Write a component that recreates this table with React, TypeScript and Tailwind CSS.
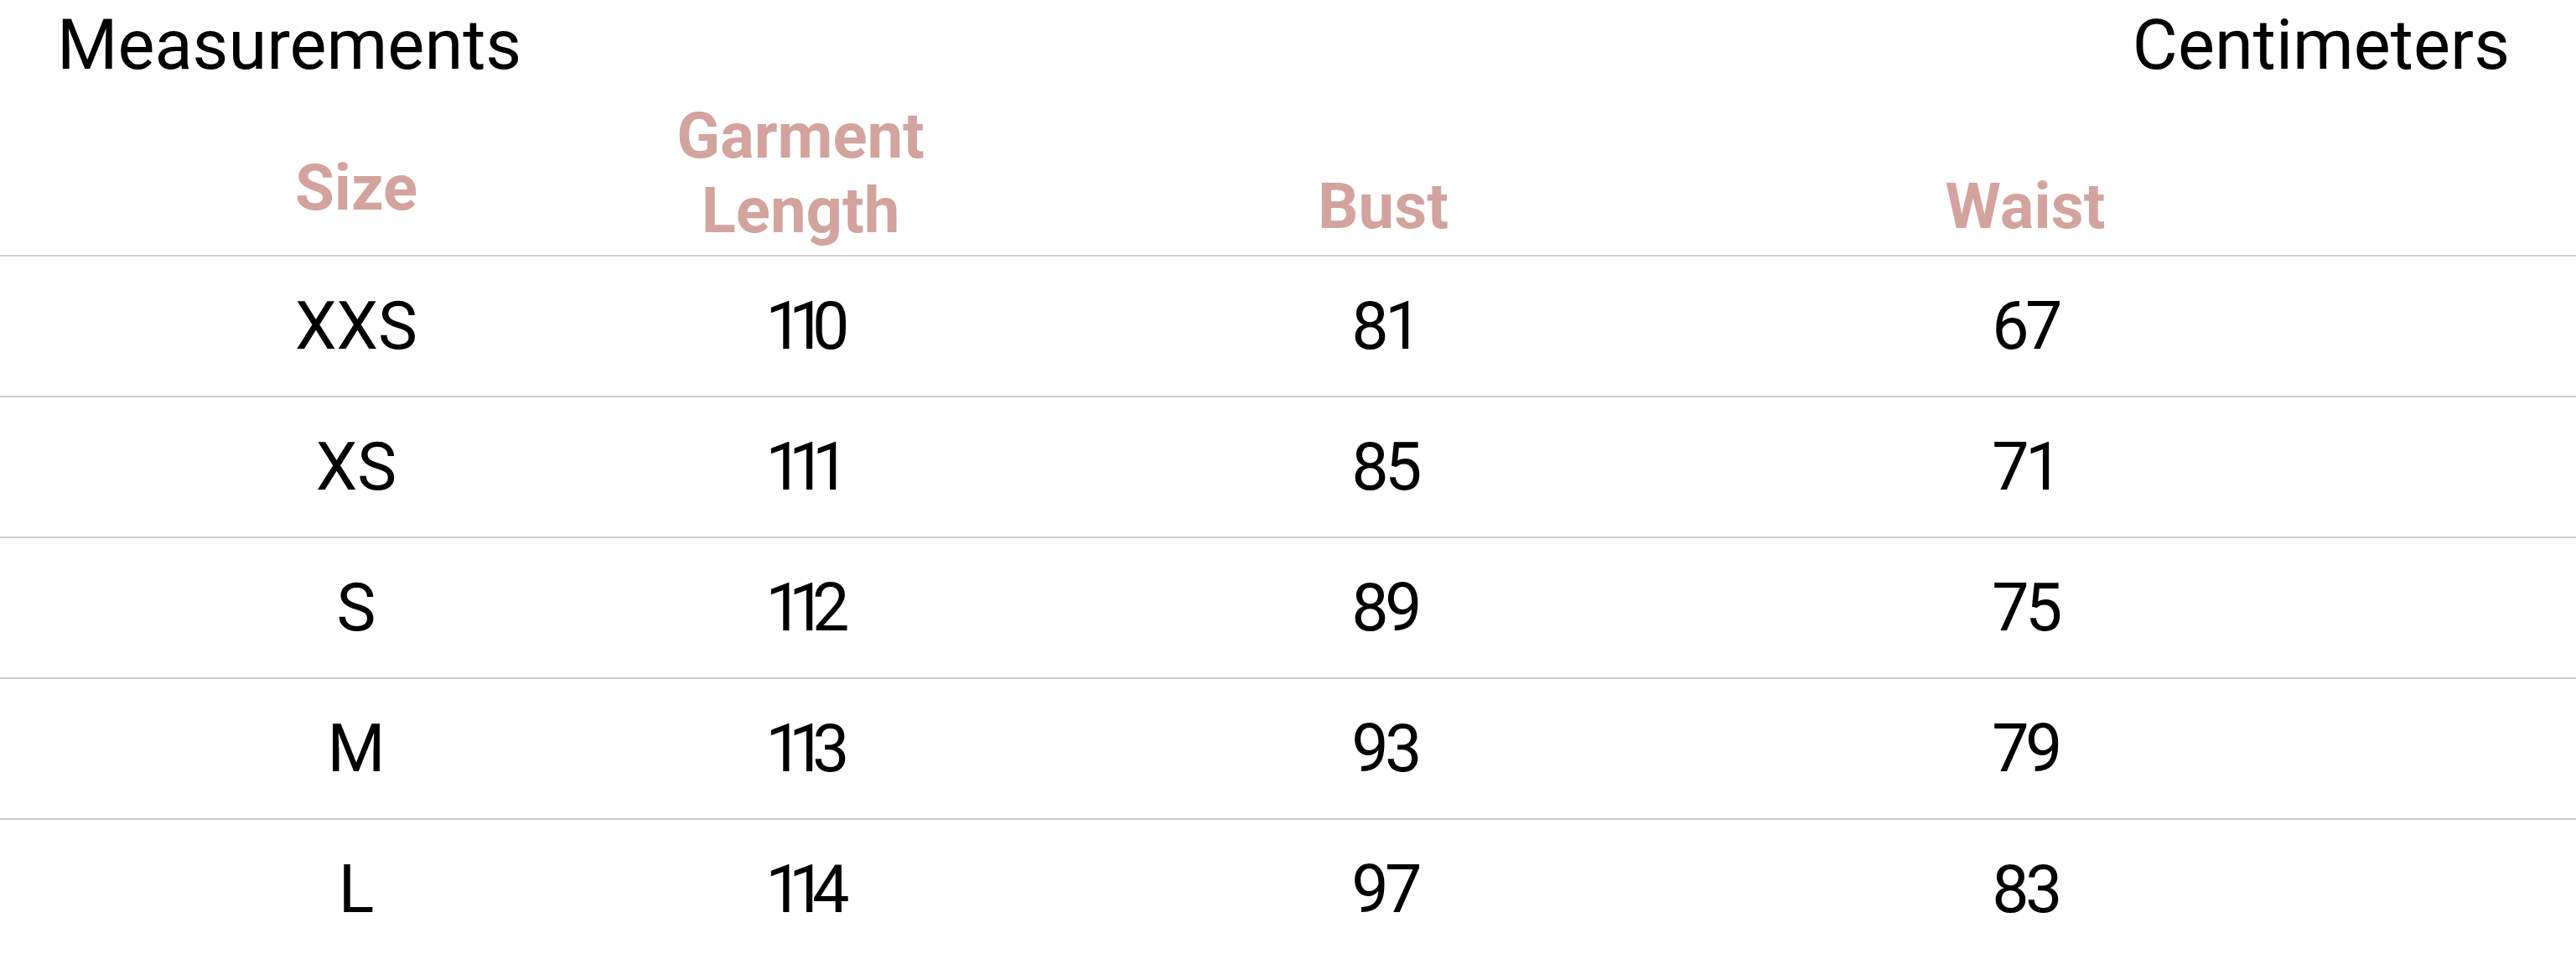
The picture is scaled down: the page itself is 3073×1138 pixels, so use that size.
const rows = [
  { size: 'XXS', length: '110', bust: '81', waist: '67' },
  { size: 'XS', length: '111', bust: '85', waist: '71' },
  { size: 'S', length: '112', bust: '89', waist: '75' },
  { size: 'M', length: '113', bust: '93', waist: '79' },
  { size: 'L', length: '114', bust: '97', waist: '83' },
]

const cols = 'grid grid-cols-[530px_530px_860px_672px] pl-[160px]'

export default function App() {
  return (
    <div className="min-h-screen w-full overflow-hidden bg-white font-['Roboto','Liberation_Sans',Arial,sans-serif]">
      <div className="flex items-start justify-between pl-[68px] pr-[79px] pt-[12px]">
        <h1 className="text-[83px] leading-none text-black">Measurements</h1>
        <span className="text-[83px] leading-none text-black">Centimeters</span>
      </div>

      <div className={`${cols} h-[209px] items-end pb-[13px] text-[76px] font-bold leading-[1.17] text-[#d3a39e]`}>
        <div className="mb-[22px] flex justify-center">Size</div>
        <div className="-mb-[5px] flex justify-center text-center">
          Garment
          <br />
          Length
        </div>
        <div className="flex justify-center">Bust</div>
        <div className="flex justify-center">Waist</div>
      </div>

      {rows.map((row) => (
        <div
          key={row.size}
          className={`${cols} h-[168px] items-center border-t-2 border-[#cdcdcd] text-[79px] leading-none text-black`}
        >
          <div className="flex justify-center">{row.size}</div>
          <div className="flex justify-center tracking-[-0.21em]">{row.length}</div>
          <div className="flex justify-center pl-[4px] tracking-[-0.06em]">{row.bust}</div>
          <div className="flex justify-center tracking-[-0.06em]">{row.waist}</div>
        </div>
      ))}
    </div>
  )
}
